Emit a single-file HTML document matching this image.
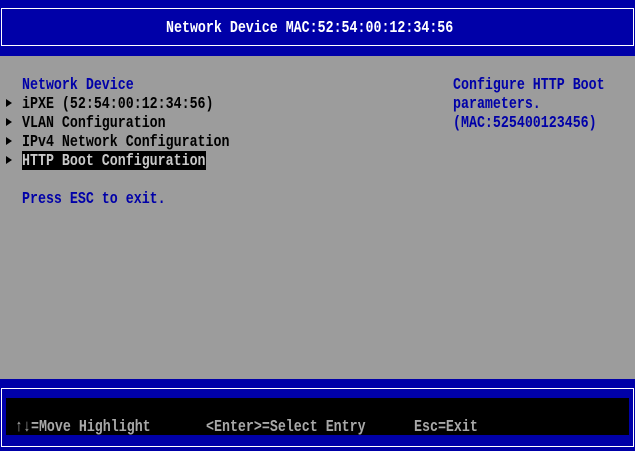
<!DOCTYPE html>
<html><head><style>
body{margin:0;width:635px;height:451px;overflow:hidden;background:#9c9c9c;position:relative;font-family:"Liberation Mono","DejaVu Sans Mono",monospace;font-size:13.3px;font-weight:bold;}
.t{position:absolute;white-space:pre;line-height:19px;height:19px;transform:scaleY(1.25);transform-origin:50% 50%;}
.b{color:#0000a8}
.k{color:#000}
.a{position:absolute;left:6px;width:0;height:0;border-left:6px solid #000;border-top:4px solid transparent;border-bottom:4px solid transparent;}
</style></head><body>
<div style="position:absolute;left:0;top:0;width:635px;height:56px;background:#0000a8"></div>
<div style="position:absolute;left:1px;top:8px;width:631px;height:36px;border:1px solid #fff"></div>
<div class="t" style="left:166px;top:18px;color:#fff">Network Device MAC:52:54:00:12:34:56</div>

<div class="t b" style="left:22px;top:75px">Network Device</div>
<div class="a" style="top:99px"></div>
<div class="t k" style="left:22px;top:94px">iPXE (52:54:00:12:34:56)</div>
<div class="a" style="top:118px"></div>
<div class="t k" style="left:22px;top:113px">VLAN Configuration</div>
<div class="a" style="top:137px"></div>
<div class="t k" style="left:22px;top:132px">IPv4 Network Configuration</div>
<div class="a" style="top:156px"></div>
<div style="position:absolute;left:22px;top:151px;width:184px;height:19px;background:#000"></div>
<div class="t" style="left:22px;top:151px;color:#c8c8c8">HTTP Boot Configuration</div>
<div class="t b" style="left:22px;top:189px">Press ESC to exit.</div>

<div class="t b" style="left:453px;top:75px">Configure HTTP Boot</div>
<div class="t b" style="left:453px;top:94px">parameters.</div>
<div class="t b" style="left:453px;top:113px">(MAC:525400123456)</div>

<div style="position:absolute;left:0;top:379px;width:635px;height:72px;background:#0000a8"></div>
<div style="position:absolute;left:1px;top:388px;width:631px;height:57px;border:1px solid #fff"></div>
<div style="position:absolute;left:6px;top:398px;width:623px;height:37px;background:#000"></div>
<div class="t" style="left:15px;top:417px;color:#a8a8a8">&#8593;&#8595;=Move Highlight</div>
<div class="t" style="left:206px;top:417px;color:#a8a8a8">&lt;Enter&gt;=Select Entry</div>
<div class="t" style="left:414px;top:417px;color:#a8a8a8">Esc=Exit</div>
</body></html>
